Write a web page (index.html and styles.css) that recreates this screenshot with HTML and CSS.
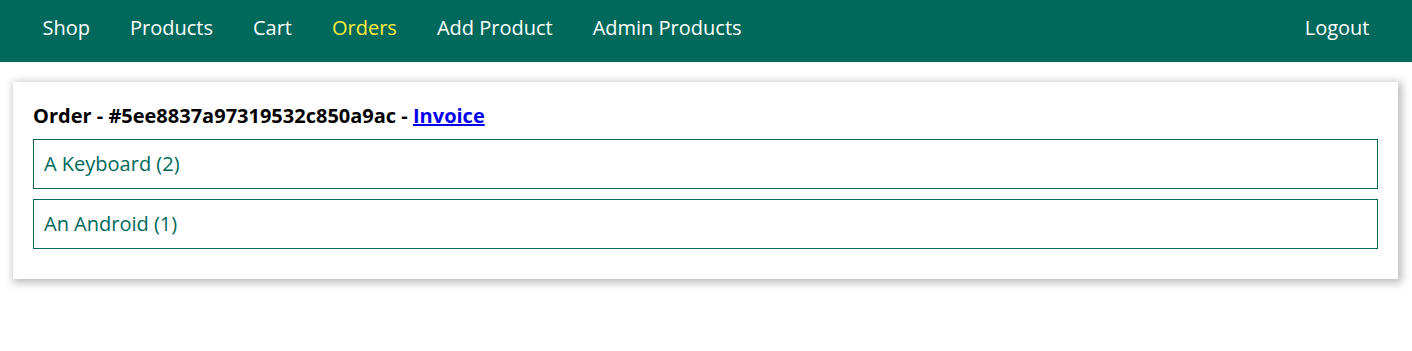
FILE: index.html
```html
<!DOCTYPE html>
<html lang="en">

<head>
  <meta charset="UTF-8">
  <meta name="viewport" content="width=device-width, initial-scale=1.0">
  <title>Your Orders</title>
  <link rel="stylesheet" href="styles.css">
</head>

<body>
  <header class="main-header">
    <nav class="main-header__nav">
      <ul class="main-header__item-list">
        <li class="main-header__item"><a href="/">Shop</a></li>
        <li class="main-header__item"><a href="/products">Products</a></li>
        <li class="main-header__item"><a href="/cart">Cart</a></li>
        <li class="main-header__item"><a class="active" href="/orders">Orders</a></li>
        <li class="main-header__item"><a href="/admin/add-product">Add Product</a></li>
        <li class="main-header__item"><a href="/admin/products">Admin Products</a></li>
      </ul>
      <ul class="main-header__item-list">
        <li class="main-header__item"><a href="/logout">Logout</a></li>
      </ul>
    </nav>
  </header>

  <main>
    <ul class="orders">
      <li class="orders__item">
        <h1>Order - #5ee8837a97319532c850a9ac - <a href="/orders/5ee8837a97319532c850a9ac">Invoice</a></h1>
        <ul class="orders__products">
          <li class="orders__products-item">A Keyboard (2)</li>
          <li class="orders__products-item">An Android (1)</li>
        </ul>
      </li>
    </ul>
  </main>
</body>

</html>
```

FILE: styles.css
```css
* {
  box-sizing: border-box;
}

body {
  padding: 0;
  margin: 0;
  font-family: 'Open Sans', sans-serif;
  font-size: 20px;
}

main {
  padding: 20px 14px 20px 13px;
  margin: auto;
}

.main-header {
  width: 100%;
  height: 62px;
  background-color: #00695c;
  padding: 0 22.5px 8px;
  display: flex;
  align-items: center;
}

.main-header__nav {
  height: 100%;
  width: 100%;
  display: flex;
  align-items: center;
  justify-content: space-between;
}

.main-header__item-list {
  list-style: none;
  margin: 0;
  padding: 0;
  display: flex;
}

.main-header__item {
  margin: 0 20px;
  padding: 0;
}

.main-header__item a {
  text-decoration: none;
  color: white;
}

.main-header__item a.active {
  color: #ffeb3b;
}

.orders {
  list-style: none;
  padding: 0;
  margin: 0;
}

.orders__item {
  box-shadow: 2px 2px 8px 2px rgba(0, 0, 0, 0.26);
  padding: 20px;
  margin-bottom: 20px;
}

.orders__item h1 {
  margin: 0;
  font-size: 20px;
  line-height: 27px;
}

.orders__item h1 a {
  color: #0000ee;
}

.orders__products {
  list-style: none;
  margin: 0;
  padding: 0;
}

.orders__products-item {
  margin: 10px 0;
  padding: 10px;
  line-height: 28px;
  border: 1px solid #00695c;
  color: #00695c;
}
```
